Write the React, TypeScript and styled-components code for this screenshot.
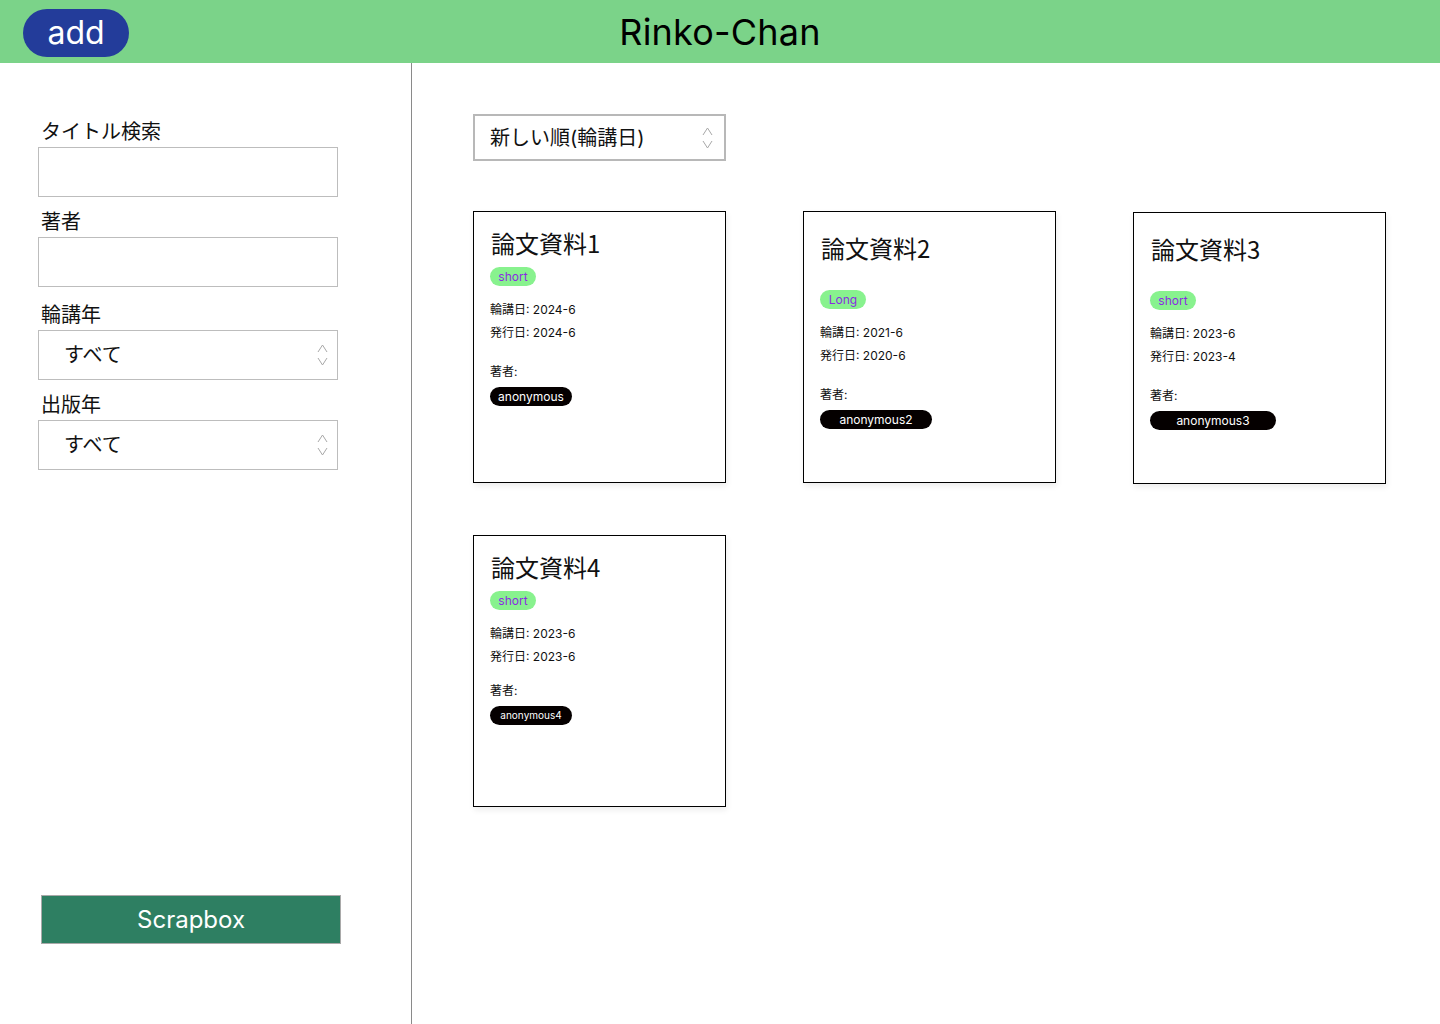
import React from "react";
import styled, { createGlobalStyle } from "styled-components";

const GlobalStyle = createGlobalStyle`
  * { box-sizing: border-box; }
  html, body { margin: 0; padding: 0; background: #ffffff; }
  body {
    font-family: Inter, "Noto Sans CJK JP", "Noto Sans", sans-serif;
    color: #111111;
  }
`;

const Page = styled.div`
  width: 1440px;
  min-height: 1024px;
  display: flex;
  flex-direction: column;
`;

const Header = styled.header`
  height: 63px;
  background: #7bd389;
  display: grid;
  grid-template-columns: 1fr auto 1fr;
  align-items: center;
  padding: 0 23px;
`;

const AddButton = styled.button`
  justify-self: start;
  width: 106px;
  height: 48px;
  margin-top: 2px;
  border: none;
  border-radius: 24px;
  background: #233c9a;
  color: #ffffff;
  font-family: Inter, sans-serif;
  font-size: 32px;
  line-height: 1;
  padding: 1px 0 0;
  cursor: pointer;
`;

const AppTitle = styled.h1`
  margin: 0;
  font-family: Inter, sans-serif;
  font-weight: 400;
  font-size: 36px;
  color: #000000;
  letter-spacing: 0.2px;
`;

const Body = styled.div`
  flex: 1;
  display: flex;
`;

const Sidebar = styled.aside`
  width: 412px;
  min-height: 961px;
  border-right: 1px solid #8a8a8a;
  display: flex;
  flex-direction: column;
  padding: 56px 0 80px 38px;
`;

const Field = styled.div<{ $gap: number }>`
  width: 300px;
  display: flex;
  flex-direction: column;
  margin-top: ${(p) => p.$gap}px;
`;

const Label = styled.label`
  font-family: "Noto Sans CJK JP", sans-serif;
  font-size: 20px;
  line-height: 24px;
  padding-left: 3px;
  margin-bottom: 4px;
  color: #111111;
`;

const TextInput = styled.input`
  width: 300px;
  height: 50px;
  border: 1px solid #bdbdbd;
  border-radius: 0;
  outline: none;
  padding: 0 12px;
  font-size: 18px;
`;

const SelectWrap = styled.div<{ $width: number; $height: number; $border: number }>`
  position: relative;
  width: ${(p) => p.$width}px;
  height: ${(p) => p.$height}px;
  border: ${(p) => p.$border}px solid ${(p) => (p.$border > 1 ? "#b8b8b8" : "#bdbdbd")};
  display: flex;
  align-items: center;
`;

const SelectText = styled.div<{ $pad: number }>`
  font-family: Inter, "Noto Sans CJK JP", sans-serif;
  font-size: 20px;
  line-height: 24px;
  padding-left: ${(p) => p.$pad}px;
  color: #111111;
`;

const Arrows = styled.svg<{ $right: number }>`
  position: absolute;
  right: ${(p) => p.$right}px;
  top: 50%;
  transform: translateY(-50%);
`;

const ScrapboxButton = styled.button`
  margin-top: auto;
  margin-left: 3px;
  width: 300px;
  height: 49px;
  background: #2e7f62;
  border: 1px solid #a9a9a9;
  color: #ffffff;
  font-family: Inter, sans-serif;
  font-size: 24px;
  cursor: pointer;
`;

const Main = styled.main`
  flex: 1;
  padding: 51px 0 0 61px;
  display: flex;
  flex-direction: column;
  gap: 50px;
`;

const CardGrid = styled.div`
  display: grid;
  grid-template-columns: repeat(3, 253px);
  column-gap: 77px;
  row-gap: 51px;
  align-items: start;
`;

const Card = styled.article<{ $shift: number }>`
  height: 272px;
  margin-top: ${(p) => p.$shift}px;
  border: 1px solid #000000;
  background: #ffffff;
  box-shadow: 1px 3px 6px rgba(0, 0, 0, 0.08);
  padding: 17px 16px 0 16px;
  display: flex;
  flex-direction: column;
  align-items: flex-start;
`;

const CardTitle = styled.h2<{ $spaced: boolean }>`
  margin: ${(p) => (p.$spaced ? 4 : -1)}px 0 ${(p) => (p.$spaced ? 27 : 9)}px 1px;
  font-family: "Noto Sans CJK JP", sans-serif;
  font-weight: 400;
  font-size: 24px;
  line-height: 30px;
  color: #111111;
`;

const Tag = styled.span`
  width: 46px;
  height: 19px;
  border-radius: 10px;
  background: #88f28e;
  color: #8a2be2;
  font-family: Inter, sans-serif;
  font-size: 12px;
  line-height: 19px;
  text-align: center;
  margin-bottom: 12px;
`;

const Meta = styled.div`
  font-family: Inter, "Noto Sans CJK JP", sans-serif;
  font-size: 12px;
  line-height: 23px;
  color: #111111;
`;

const AuthorLabel = styled(Meta)<{ $gap: number }>`
  margin-top: ${(p) => p.$gap}px;
`;

const Pill = styled.span<{ $width: number; $small: boolean }>`
  margin-top: 4px;
  width: ${(p) => p.$width}px;
  height: 19px;
  border-radius: 10px;
  background: #050000;
  color: #ffffff;
  font-family: Inter, sans-serif;
  font-size: ${(p) => (p.$small ? 10 : 12)}px;
  line-height: 19px;
  text-align: center;
`;

type Paper = {
  title: string;
  tag: string;
  rinko: string;
  issued: string;
  author: string;
  pillWidth: number;
  spaced: boolean;
  shift: number;
  authorGap: number;
  smallPill: boolean;
};

const papers: Paper[] = [
  { title: "論文資料1", tag: "short", rinko: "2024-6", issued: "2024-6", author: "anonymous", pillWidth: 82, spaced: false, shift: 0, authorGap: 16, smallPill: false },
  { title: "論文資料2", tag: "Long", rinko: "2021-6", issued: "2020-6", author: "anonymous2", pillWidth: 112, spaced: true, shift: 0, authorGap: 16, smallPill: false },
  { title: "論文資料3", tag: "short", rinko: "2023-6", issued: "2023-4", author: "anonymous3", pillWidth: 126, spaced: true, shift: 1, authorGap: 16, smallPill: false },
  { title: "論文資料4", tag: "short", rinko: "2023-6", issued: "2023-6", author: "anonymous4", pillWidth: 82, spaced: false, shift: 0, authorGap: 11, smallPill: true },
];

const UpDown = ({ right }: { right: number }) => (
  <Arrows $right={right} width="11" height="24" viewBox="0 0 11 24">
    <path d="M1 9 L5.5 2 L10 9" fill="none" stroke="#a8a8a8" strokeWidth="1" />
    <path d="M1 15 L5.5 22 L10 15" fill="none" stroke="#a8a8a8" strokeWidth="1" />
  </Arrows>
);

const FakeSelect = ({ text, width, height, border, pad, right }: { text: string; width: number; height: number; border: number; pad: number; right: number }) => (
  <SelectWrap $width={width} $height={height} $border={border}>
    <SelectText $pad={pad}>{text}</SelectText>
    <UpDown right={right} />
  </SelectWrap>
);

export default function App() {
  return (
    <>
      <GlobalStyle />
      <Page>
        <Header>
          <AddButton>add</AddButton>
          <AppTitle>Rinko-Chan</AppTitle>
          <span />
        </Header>
        <Body>
          <Sidebar>
            <Field $gap={0}>
              <Label>タイトル検索</Label>
              <TextInput />
            </Field>
            <Field $gap={12}>
              <Label>著者</Label>
              <TextInput />
            </Field>
            <Field $gap={15}>
              <Label>輪講年</Label>
              <FakeSelect text="すべて" width={300} height={50} border={1} pad={25} right={9} />
            </Field>
            <Field $gap={12}>
              <Label>出版年</Label>
              <FakeSelect text="すべて" width={300} height={50} border={1} pad={25} right={9} />
            </Field>
            <ScrapboxButton>Scrapbox</ScrapboxButton>
          </Sidebar>
          <Main>
            <FakeSelect text="新しい順(輪講日)" width={253} height={47} border={2} pad={15} right={11} />
            <CardGrid>
              {papers.map((p) => (
                <Card key={p.title} $shift={p.shift}>
                  <CardTitle $spaced={p.spaced}>{p.title}</CardTitle>
                  <Tag>{p.tag}</Tag>
                  <Meta>輪講日: {p.rinko}</Meta>
                  <Meta>発行日: {p.issued}</Meta>
                  <AuthorLabel $gap={p.authorGap}>著者:</AuthorLabel>
                  <Pill $width={p.pillWidth} $small={p.smallPill}>{p.author}</Pill>
                </Card>
              ))}
            </CardGrid>
          </Main>
        </Body>
      </Page>
    </>
  );
}
